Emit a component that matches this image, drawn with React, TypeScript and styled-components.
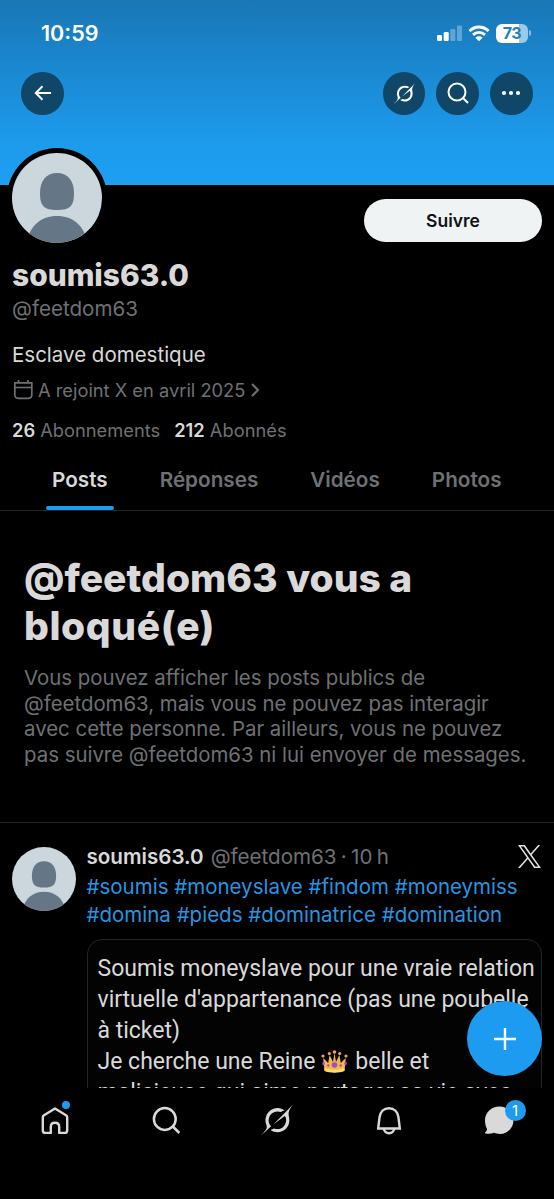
import React from "react";
import styled, { createGlobalStyle } from "styled-components";

const GlobalStyle = createGlobalStyle`
  * { box-sizing: border-box; }
  body { margin: 0; background: #000; }
`;

const colors = {
  text: "#d9d9d9",
  muted: "#6e7174",
  link: "#2795e0",
  accent: "#1d9bf0",
  line: "#242527",
};

const Screen = styled.div`
  position: relative;
  display: flex;
  flex-direction: column;
  width: 554px;
  height: 1199px;
  overflow: hidden;
  background: #000;
  color: ${colors.text};
  font-family: Inter, "Liberation Sans", sans-serif;
  white-space: nowrap;
`;

const Banner = styled.header`
  flex: none;
  height: 185px;
  background: linear-gradient(#1977b5 0, #1a86ce 60px, #1d9bed 145px, #1d9ff1 185px);
`;

const StatusBar = styled.div`
  display: flex;
  align-items: center;
  justify-content: space-between;
  height: 72px;
  padding: 0 23px 6px 41px;
  color: #fff;
`;

const Clock = styled.span`
  font-size: 21.5px;
  font-weight: 600;
`;

const StatusIcons = styled.div`
  display: flex;
  align-items: center;
  gap: 6px;
`;

const Battery = styled.div`
  display: flex;
  align-items: center;
  gap: 1px;
`;

const BatteryBody = styled.div`
  display: flex;
  align-items: center;
  justify-content: center;
  width: 32px;
  height: 19px;
  border-radius: 6px;
  background: linear-gradient(90deg, #fff 73%, #9ccbea 73%);
  color: #2380bd;
  font-size: 16px;
  font-weight: 700;
  letter-spacing: -0.4px;
`;

const BatteryTip = styled.div`
  width: 2px;
  height: 6px;
  border-radius: 0 3px 3px 0;
  background: #86bde2;
`;

const Actions = styled.div`
  display: flex;
  gap: 11px;
  padding: 0 21.400px;
`;

const RoundButton = styled.button<{ $push?: boolean }>`
  display: flex;
  align-items: center;
  justify-content: center;
  width: 42.600px;
  height: 42.600px;
  padding: 0;
  border: 0;
  border-radius: 50%;
  margin-right: ${(p) => (p.$push ? "auto" : "0")};
  background: #104668;
  color: #fff;
`;

const Content = styled.main`
  flex: 1;
  min-height: 0;
  margin-top: -51px;
  padding-top: 51px;
  overflow: hidden;
`;

const ProfileTop = styled.div`
  display: flex;
  justify-content: space-between;
  align-items: flex-start;
  height: 73px;
  padding: 14px 12px 0 7px;
`;

const AvatarRing = styled.div`
  margin-top: -51px;
  padding: 5px;
  border-radius: 50%;
  background: #000;
`;

const AvatarSvg = styled.svg`
  display: block;
  flex: none;
  border-radius: 50%;
`;

const FollowButton = styled.button`
  width: 178px;
  height: 43px;
  padding: 0;
  border: 0;
  border-radius: 22px;
  background: #eff3f4;
  color: #0f1114;
  font: 600 17.5px Inter, sans-serif;
`;

const Profile = styled.section`
  padding: 0 12px;
`;

const Name = styled.h1`
  margin: -1px 0 1px;
  font-size: 29.9px;
  line-height: 36px;
  font-weight: 800;
`;

const Handle = styled.div`
  color: ${colors.muted};
  font-size: 20.6px;
  line-height: 30px;
`;

const Bio = styled.div`
  margin-top: 16px;
  font-size: 20.5px;
  line-height: 30px;
`;

const Joined = styled.div`
  display: flex;
  align-items: center;
  gap: 4px;
  height: 30px;
  margin-top: 5px;
  color: ${colors.muted};
  font-size: 18.3px;
`;

const Counts = styled.div`
  display: flex;
  gap: 14px;
  margin-top: 11px;
  color: ${colors.muted};
  font-size: 18.300px;
  line-height: 28px;

  b {
    color: ${colors.text};
    font-weight: 600;
  }
`;

const Tabs = styled.nav`
  display: flex;
  gap: 40px;
  height: 67px;
  padding: 0 46px;
  border-bottom: 1px solid ${colors.line};
`;

const Tab = styled.div<{ $active?: boolean }>`
  display: flex;
  flex-direction: column;
  justify-content: space-between;
  padding: 21px 6px 0;
  color: ${(p) => (p.$active ? colors.text : colors.muted)};
  font-size: 20.7px;
  line-height: 30px;
  font-weight: 600;

  &::after {
    content: "";
    height: 4px;
    margin: 0 -6px;
    border-radius: 2px;
    background: ${(p) => (p.$active ? colors.accent : "transparent")};
  }
`;

const Blocked = styled.section`
  height: 312px;
  padding: 43px 24px 0;
  border-bottom: 1px solid ${colors.line};

  h2 {
    margin: 0;
    font-size: 39px;
    line-height: 48px;
    font-weight: 800;
  }

  p {
    margin: 15px 0 0;
    color: ${colors.muted};
    font-size: 20.4px;
    line-height: 25.5px;
  }
`;

const LooseLine = styled.span`
  letter-spacing: 0.6px;
`;

const Post = styled.article`
  display: flex;
  gap: 10.500px;
  padding: 19px 12px 0;
`;

const PostAvatar = styled.div`
  padding-top: 5px;
`;

const PostBody = styled.div`
  flex: 1;
  min-width: 0;
`;

const PostHead = styled.div`
  display: flex;
  align-items: center;
  height: 28px;
  font-size: 20.6px;

  b {
    margin-right: 7px;
    font-weight: 600;
  }
`;

const Meta = styled.span`
  flex: 1;
  color: ${colors.muted};
  word-spacing: -1.500px;
`;

const XLogo = styled.svg`
  margin-right: 1px;
`;

const Hashtags = styled.div`
  margin-top: 3px;
  color: ${colors.link};
  font-size: 20.5px;
  line-height: 28px;
`;

const Card = styled.div`
  height: 260px;
  margin-top: 10px;
  padding: 13px 0 0 10px;
  border: 1px solid ${colors.line};
  border-radius: 15px;
  background: #030303;
  font-family: Roboto, sans-serif;
  font-size: 23px;
  line-height: 31px;
`;

const Crown = styled.svg`
  margin: 0 7px 0 6px;
  vertical-align: -4px;
`;

const TabBar = styled.footer`
  display: flex;
  flex: none;
  align-items: flex-start;
  height: 111px;
  background: #000;
`;

const NavItem = styled.div`
  flex: 1;
  display: flex;
  justify-content: center;
  padding-top: 14px;
`;

const IconWrap = styled.div<{ $inset?: number }>`
  position: relative;
  width: 36px;
  height: 36px;
  padding: ${(p) => p.$inset ?? 0}px;

  svg { display: block; }
`;

const Dot = styled.span`
  position: absolute;
  top: -1px;
  right: 3px;
  width: 8px;
  height: 8px;
  border-radius: 50%;
  background: ${colors.accent};
`;

const Badge = styled.span`
  position: absolute;
  top: -2px;
  right: -9px;
  width: 21px;
  height: 21px;
  border-radius: 50%;
  background: ${colors.accent};
  color: #fff;
  font-size: 15px;
  line-height: 21px;
  text-align: center;
`;

const Fab = styled.button`
  position: absolute;
  right: 12px;
  top: 1001px;
  display: flex;
  align-items: center;
  justify-content: center;
  width: 75px;
  height: 75px;
  padding: 0;
  border: 0;
  border-radius: 50%;
  background: ${colors.accent};
`;

const Avatar = ({ size }: { size: number }) => (
  <AvatarSvg width={size} height={size} viewBox="0 0 90 90">
    <rect width="90" height="90" fill="#ccd6dd" />
    <path
      d="M45 20c11 0 17 8 17 20 0 13-4 17-17 17s-17-4-17-17c0-12 6-20 17-20z"
      fill="#657786"
    />
    <path d="M15 90c2-17 14-27 30-27s28 10 30 27z" fill="#657786" />
  </AvatarSvg>
);

const GrokIcon = ({ size }: { size: number }) => (
  <svg width={size} height={size} viewBox="0 0 33 32" fill="currentColor">
    <path d="M12.745 20.54l10.97-8.19c.539-.4 1.307-.244 1.564.38 1.349 3.288.746 7.241-1.938 9.955-2.683 2.714-6.417 3.31-9.83 1.954l-3.728 1.745c5.347 3.697 11.84 2.782 15.898-1.324 3.219-3.255 4.216-7.692 3.284-11.693l.008.009c-1.351-5.878.332-8.227 3.782-13.031L33 0l-4.54 4.59v-.014L12.743 20.544m-2.263 1.987c-3.837-3.707-3.175-9.446.1-12.755 2.42-2.449 6.388-3.448 9.852-1.979l3.72-1.737c-.67-.49-1.53-1.017-2.515-1.387-4.455-1.854-9.789-.931-13.41 2.728-3.483 3.523-4.579 8.94-2.697 13.561 1.405 3.454-.899 5.898-3.22 8.364C1.49 30.2.666 31.074 0 32l10.478-9.466" />
  </svg>
);

const SignalIcon = () => (
  <svg width="25" height="17" viewBox="0 0 25 17" fill="#fff">
    <rect x="0" y="10" width="5" height="6" rx="1.3" />
    <rect x="6.7" y="7" width="5" height="9" rx="1.3" />
    <rect x="13.3" y="4" width="5" height="12" rx="1.3" opacity=".3" />
    <rect x="20" y="0.5" width="5" height="15.5" rx="1.3" opacity=".3" />
  </svg>
);

const WifiIcon = () => (
  <svg width="22" height="17" viewBox="0 0 22 17" fill="none" stroke="#fff" strokeWidth="3">
    <path d="M1.5 6c5.6-5.2 13.4-5.2 19 0" />
    <path d="M5 9.900c3.600-3.200 8.400-3.200 12 0" />
    <path d="M7.400 12.700 11 16.300l3.600-3.600c-2.200-1.800-5-1.800-7.200 0z" fill="#fff" stroke="none" />
  </svg>
);

const CrownIcon = () => (
  <Crown width="27" height="23" viewBox="0 0 27 23">
    <path d="M3.500 20.500 2.200 8l5 5L8.600 5l3.400 7 1.500-9L15 12l3.400-7 1.400 8 5-5-1.300 12.500c-5 2.300-15 2.300-20 0z" fill="#f5b944" />
    <path d="M3.500 18c5 2.400 15 2.400 20 0v3c-5 2.200-15 2.200-20 0z" fill="#ffdc72" />
    <g fill="#f1a64b">
      <circle cx="2" cy="6" r="1.600" />
      <circle cx="8.300" cy="3.500" r="1.600" />
      <circle cx="13.500" cy="2" r="1.800" />
      <circle cx="18.700" cy="3.500" r="1.600" />
      <circle cx="25" cy="6" r="1.600" />
    </g>
    <g fill="#a14bd8">
      <circle cx="13.500" cy="15" r="2.800" />
      <circle cx="7.300" cy="15.500" r="1.200" />
      <circle cx="19.700" cy="15.500" r="1.200" />
      <ellipse cx="2.500" cy="13.500" rx="1.200" ry="2" />
      <ellipse cx="24.500" cy="13.500" rx="1.200" ry="2" />
    </g>
  </Crown>
);

export default function App() {
  return (
    <Screen>
      <GlobalStyle />
      <Banner>
        <StatusBar>
          <Clock>10:59</Clock>
          <StatusIcons>
            <SignalIcon />
            <WifiIcon />
            <Battery>
              <BatteryBody>73</BatteryBody>
              <BatteryTip />
            </Battery>
          </StatusIcons>
        </StatusBar>
        <Actions>
          <RoundButton $push aria-label="Retour">
            <svg width="18" height="16" viewBox="0 0 18 16" fill="none" stroke="currentColor" strokeWidth="2">
              <path d="M17 8H2M8.500 1.300 1.800 8l6.700 6.700" />
            </svg>
          </RoundButton>
          <RoundButton aria-label="Grok">
            <GrokIcon size={21} />
          </RoundButton>
          <RoundButton aria-label="Rechercher">
            <svg width="22" height="22" viewBox="0 0 22 22" fill="none" stroke="currentColor" strokeWidth="2">
              <circle cx="10" cy="10" r="8.500" />
              <path d="m16 16 5 5" />
            </svg>
          </RoundButton>
          <RoundButton aria-label="Plus">
            <svg width="20" height="6" viewBox="0 0 20 6" fill="currentColor">
              <circle cx="3" cy="3" r="2.100" />
              <circle cx="10" cy="3" r="2.100" />
              <circle cx="17" cy="3" r="2.100" />
            </svg>
          </RoundButton>
        </Actions>
      </Banner>

      <Content>
        <ProfileTop>
          <AvatarRing>
            <Avatar size={90} />
          </AvatarRing>
          <FollowButton>Suivre</FollowButton>
        </ProfileTop>

        <Profile>
          <Name>soumis63.0</Name>
          <Handle>@feetdom63</Handle>
          <Bio>Esclave domestique</Bio>
          <Joined>
            <svg width="22" height="20" viewBox="0 0 22 20" fill="none" stroke="currentColor" strokeWidth="1.700">
              <path d="M2.800 2.800h17v12c0 2.300-1.200 3.500-3.500 3.500h-10c-2.300 0-3.500-1.200-3.500-3.500zM2.800 7.500h17M6.500 0v3M16 0v3" />
            </svg>
            <span>A rejoint X en avril 2025</span>
            <svg width="12" height="16" viewBox="0 0 12 16" fill="none" stroke="currentColor" strokeWidth="2">
              <path d="m3 2 6 6-6 6" />
            </svg>
          </Joined>
          <Counts>
            <span><b>26</b> Abonnements</span>
            <span><b>212</b> Abonnés</span>
          </Counts>
        </Profile>

        <Tabs>
          <Tab $active>Posts</Tab>
          <Tab>Réponses</Tab>
          <Tab>Vidéos</Tab>
          <Tab>Photos</Tab>
        </Tabs>

        <Blocked>
          <h2>@feetdom63 vous a<br /><LooseLine>bloqué(e)</LooseLine></h2>
          <p>
            Vous pouvez afficher les posts publics de<br />
            @feetdom63, mais vous ne pouvez pas interagir<br />
            avec cette personne. Par ailleurs, vous ne pouvez<br />
            pas suivre @feetdom63 ni lui envoyer de messages.
          </p>
        </Blocked>

        <Post>
          <PostAvatar>
            <Avatar size={64} />
          </PostAvatar>
          <PostBody>
            <PostHead>
              <b>soumis63.0</b>
              <Meta>@feetdom63 · 10 h</Meta>
              <XLogo width="23" height="23" viewBox="0 0 24 24" fill="#e4e4e4">
                <path d="M14.258 10.152L23.176 0h-2.113l-7.747 8.813L7.133 0H0l9.352 13.328L0 23.973h2.113l8.176-9.309 6.531 9.309h7.133zm-2.895 3.293l-.949-1.328L2.875 1.56h3.246l6.086 8.523.945 1.328 7.91 11.078h-3.246z" />
              </XLogo>
            </PostHead>
            <Hashtags>
              #soumis #moneyslave #findom #moneymiss<br />
              #domina #pieds #dominatrice #domination
            </Hashtags>
            <Card>
              Soumis moneyslave pour une vraie relation<br />
              virtuelle d'appartenance (pas une poubelle<br />
              à ticket)<br />
              Je cherche une Reine<CrownIcon />belle et<br />
              malicieuse qui aime partager sa vie avec
            </Card>
          </PostBody>
        </Post>
      </Content>

      <TabBar>
        <NavItem>
          <IconWrap>
            <svg width="36" height="36" viewBox="0 0 36 36" fill="none" stroke={colors.text} strokeWidth="2.400" strokeLinejoin="round">
              <path d="M18 6.500 29 13.300c.8.500 1.200 1.200 1.200 2.100v12.800c0 1.700-1 2.700-2.700 2.700h-5.300v-6.200c0-2.400-1.600-4-4.200-4s-4.200 1.600-4.200 4v6.200H8.500c-1.700 0-2.700-1-2.700-2.700V15.400c0-.9.400-1.600 1.200-2.100z" />
            </svg>
            <Dot />
          </IconWrap>
        </NavItem>
        <NavItem>
          <IconWrap>
            <svg width="36" height="36" viewBox="0 0 36 36" fill="none" stroke={colors.text} strokeWidth="2.500">
              <circle cx="16.800" cy="17" r="10.900" />
              <path d="m24.800 24.500 6.500 6.500" />
            </svg>
          </IconWrap>
        </NavItem>
        <NavItem>
          <IconWrap $inset={2}>
            <GrokIcon size={32} />
          </IconWrap>
        </NavItem>
        <NavItem>
          <IconWrap>
            <svg width="36" height="36" viewBox="0 0 36 36" fill="none" stroke={colors.text} strokeWidth="2.400">
              <path d="M8.200 26.500 9.500 15.500C10.200 9.500 14 6.200 19 6.200s8.800 3.300 9.500 9.300L29.800 26.500z" />
              <path d="M13.800 27c.7 2.800 2.500 4.200 5.200 4.200s4.500-1.400 5.200-4.200" />
            </svg>
          </IconWrap>
        </NavItem>
        <NavItem>
          <IconWrap>
            <svg width="36" height="36" viewBox="0 0 36 36" fill={colors.text}>
              <path d="M18.500 4.500c8 0 14 6 14 13.700s-6 13.800-13.500 13.800c-2.300 0-4.300-.5-6-1.200-2.300 1-5 1.300-8.300.8-.8-.1-1-.9-.4-1.400 1-.9 1.700-2.100 1.700-3.300C4.700 24.500 4 21.500 4 18.500c0-8 6.500-14 14.500-14z" />
            </svg>
            <Badge>1</Badge>
          </IconWrap>
        </NavItem>
      </TabBar>

      <Fab aria-label="Nouveau post">
        <svg width="22" height="22" viewBox="0 0 22 22" stroke="#fff" strokeWidth="2.400">
          <path d="M0 11h22M11 0v22" />
        </svg>
      </Fab>
    </Screen>
  );
}
